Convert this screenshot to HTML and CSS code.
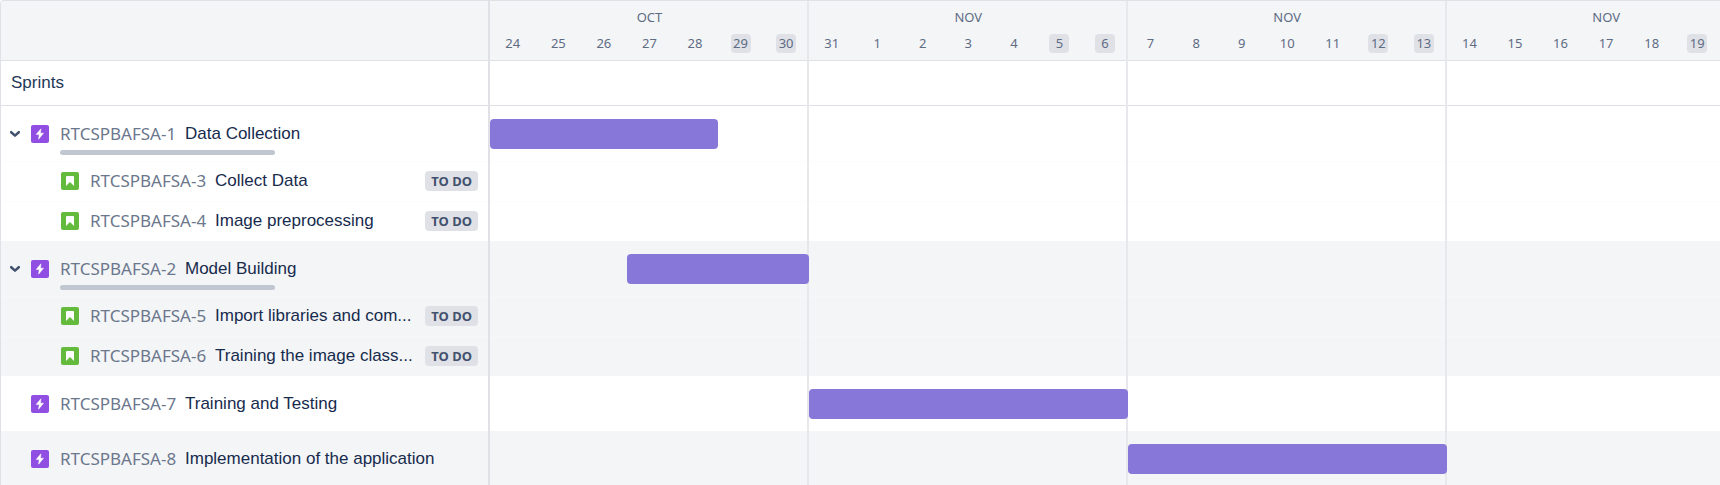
FILE: index.html
```
<!DOCTYPE html>
<html lang="en">
<head>
<meta charset="utf-8">
<title>Roadmap</title>
<link rel="stylesheet" href="styles.css">
</head>
<body>
<svg class="sprite" aria-hidden="true">
  <symbol id="epic" viewBox="0 0 18 18">
    <rect width="18" height="18" rx="2" fill="#904ee2"/>
    <path d="M9.9 3.8 5.2 9.4h3l-.6 4.8 4.9-6h-3z" fill="#fff" stroke="#fff" stroke-width=".5" stroke-linejoin="round"/>
  </symbol>
  <symbol id="story" viewBox="0 0 18 18">
    <rect width="18" height="18" rx="2" fill="#63ba3c"/>
    <path d="M6 4h6a1 1 0 0 1 1 1v9l-4-4-4 4V5a1 1 0 0 1 1-1z" fill="#fff"/>
  </symbol>
  <symbol id="chevron" viewBox="0 0 12 8">
    <path d="M2.2 2.2 6 5.600l3.800-3.400" fill="none" stroke="#42526e" stroke-width="2.500" stroke-linecap="round" stroke-linejoin="round"/>
  </symbol>
</svg>
<main class="roadmap">
  <section class="issues">
    <div class="head"></div>
    <div class="sprints">Sprints</div>
    <div class="group">
      <div class="row epic">
        <button class="toggle" type="button" aria-label="Collapse" aria-expanded="true"><svg><use href="#chevron"/></svg></button>
        <svg class="type"><use href="#epic"/></svg>
        <span class="key">RTCSPBAFSA-1</span><span class="title">Data Collection</span>
        <div class="progress"></div>
      </div>
      <div class="row story">
        <svg class="type"><use href="#story"/></svg>
        <span class="key">RTCSPBAFSA-3</span><span class="title">Collect Data</span><span class="status">TO DO</span>
      </div>
      <div class="row story">
        <svg class="type"><use href="#story"/></svg>
        <span class="key">RTCSPBAFSA-4</span><span class="title">Image preprocessing</span><span class="status">TO DO</span>
      </div>
    </div>
    <div class="group shaded">
      <div class="row epic">
        <button class="toggle" type="button" aria-label="Collapse" aria-expanded="true"><svg><use href="#chevron"/></svg></button>
        <svg class="type"><use href="#epic"/></svg>
        <span class="key">RTCSPBAFSA-2</span><span class="title">Model Building</span>
        <div class="progress"></div>
      </div>
      <div class="row story">
        <svg class="type"><use href="#story"/></svg>
        <span class="key">RTCSPBAFSA-5</span><span class="title">Import libraries and com...</span><span class="status">TO DO</span>
      </div>
      <div class="row story">
        <svg class="type"><use href="#story"/></svg>
        <span class="key">RTCSPBAFSA-6</span><span class="title">Training the image class...</span><span class="status">TO DO</span>
      </div>
    </div>
    <div class="group">
      <div class="row epic">
        <span class="toggle"></span>
        <svg class="type"><use href="#epic"/></svg>
        <span class="key">RTCSPBAFSA-7</span><span class="title">Training and Testing</span>
      </div>
    </div>
    <div class="group shaded">
      <div class="row epic">
        <span class="toggle"></span>
        <svg class="type"><use href="#epic"/></svg>
        <span class="key">RTCSPBAFSA-8</span><span class="title">Implementation of the application</span>
      </div>
    </div>
  </section>
  <section class="timeline">
    <div class="track">
      <div class="head weeks">
        <div class="week"><span class="month">OCT</span><span>24</span><span>25</span><span>26</span><span>27</span><span>28</span><span class="off">29</span><span class="off">30</span></div>
        <div class="week"><span class="month">NOV</span><span>31</span><span>1</span><span>2</span><span>3</span><span>4</span><span class="off">5</span><span class="off">6</span></div>
        <div class="week"><span class="month">NOV</span><span>7</span><span>8</span><span>9</span><span>10</span><span>11</span><span class="off">12</span><span class="off">13</span></div>
        <div class="week"><span class="month">NOV</span><span>14</span><span>15</span><span>16</span><span>17</span><span>18</span><span class="off">19</span></div>
      </div>
      <div class="sprints"></div>
      <div class="group">
        <div class="row epic lane"><div class="bar data-collection"></div></div>
        <div class="row story"></div>
        <div class="row story"></div>
      </div>
      <div class="group shaded">
        <div class="row epic lane"><div class="bar model-building"></div></div>
        <div class="row story"></div>
        <div class="row story"></div>
      </div>
      <div class="group"><div class="row epic lane"><div class="bar training"></div></div></div>
      <div class="group shaded"><div class="row epic lane"><div class="bar implementation"></div></div></div>
      <div class="rules"><i></i><i></i><i></i><i></i></div>
    </div>
  </section>
</main>
</body>
</html>
```

FILE: styles.css
```
* { box-sizing: border-box; }
html { overflow: hidden; }
body { margin: 0; background: #fff; color: #172b4d; font-family: "Liberation Sans", Arial, sans-serif; font-size: 17px; line-height: 20px; }
.sprite { display: none; }
.roadmap { display: grid; grid-template-columns: 489px minmax(0, 1fr); border-top: 1px solid #dfe1e6; border-left: 1px solid #dfe1e6; border-top-left-radius: 4px; overflow: hidden; }
.issues { border-right: 2px solid #dfe1e6; }
.head { height: 60px; background: #f4f5f7; border-bottom: 1px solid #dfe1e6; }
.sprints { height: 45px; padding: 12px 10px; border-bottom: 1px solid #dfe1e6; color: #253858; }
.shaded { background: #f4f5f7; }

.row { display: flex; align-items: center; }
.epic { height: 55px; flex-wrap: wrap; align-content: flex-start; padding: 13px 10px 0 8px; }
.story { height: 40px; padding: 0 10px 1px 60px; border-top: 1px solid #f6f7f9; }
.group:not(.shaded) .story { border-top-color: #fcfcfd; }
.toggle { width: 12px; height: 30px; margin-right: 10px; padding: 0; border: 0; background: none; display: flex; align-items: center; }
.toggle svg { width: 12px; height: 8px; }
.type { width: 18px; height: 18px; flex: none; margin-right: 11px; }
.key { width: 125px; flex: none; color: #6b778c; font-family: "Noto Sans", sans-serif; }
.title { white-space: nowrap; }
.status { flex: none; margin-left: auto; padding: 0 6px; border-radius: 4px; background: #dfe1e6; color: #42526e; font-family: "Noto Sans", sans-serif; font-size: 13px; font-weight: 700; }
.progress { width: 215px; height: 5px; margin: 1px 0 0 51px; border-radius: 3px; background: #c1c7d0; }

.timeline { overflow: hidden; }
.track { position: relative; width: calc(100% * 28 / 27); }
.weeks { display: grid; grid-template-columns: repeat(4, 1fr); }
.week { display: grid; grid-template-columns: repeat(7, 1fr); grid-template-rows: 20px 19px; row-gap: 7px; justify-items: center; align-content: start; padding-top: 6px; color: #5e6c84; font-family: "Noto Sans", sans-serif; font-size: 13px; line-height: 19px; }
.month { grid-column: 1 / -1; line-height: 20px; }
.off { width: 20px; text-align: center; border-radius: 4px; background: #dfe1e6; }
.lane { display: grid; grid-template-columns: repeat(28, 1fr); padding: 13px 0 0; }
.bar { position: relative; z-index: 1; height: 30px; border-radius: 4px; background: #8777d9; }
.data-collection { grid-column: 1 / 6; }
.model-building { grid-column: 4 / 8; }
.training { grid-column: 8 / 15; }
.implementation { grid-column: 15 / 22; }
/* week separators run over every lane */
.rules { position: absolute; inset: 0; display: grid; grid-template-columns: repeat(4, 1fr); }
.rules i { border-right: 2px solid #e6e8ec; }
```
